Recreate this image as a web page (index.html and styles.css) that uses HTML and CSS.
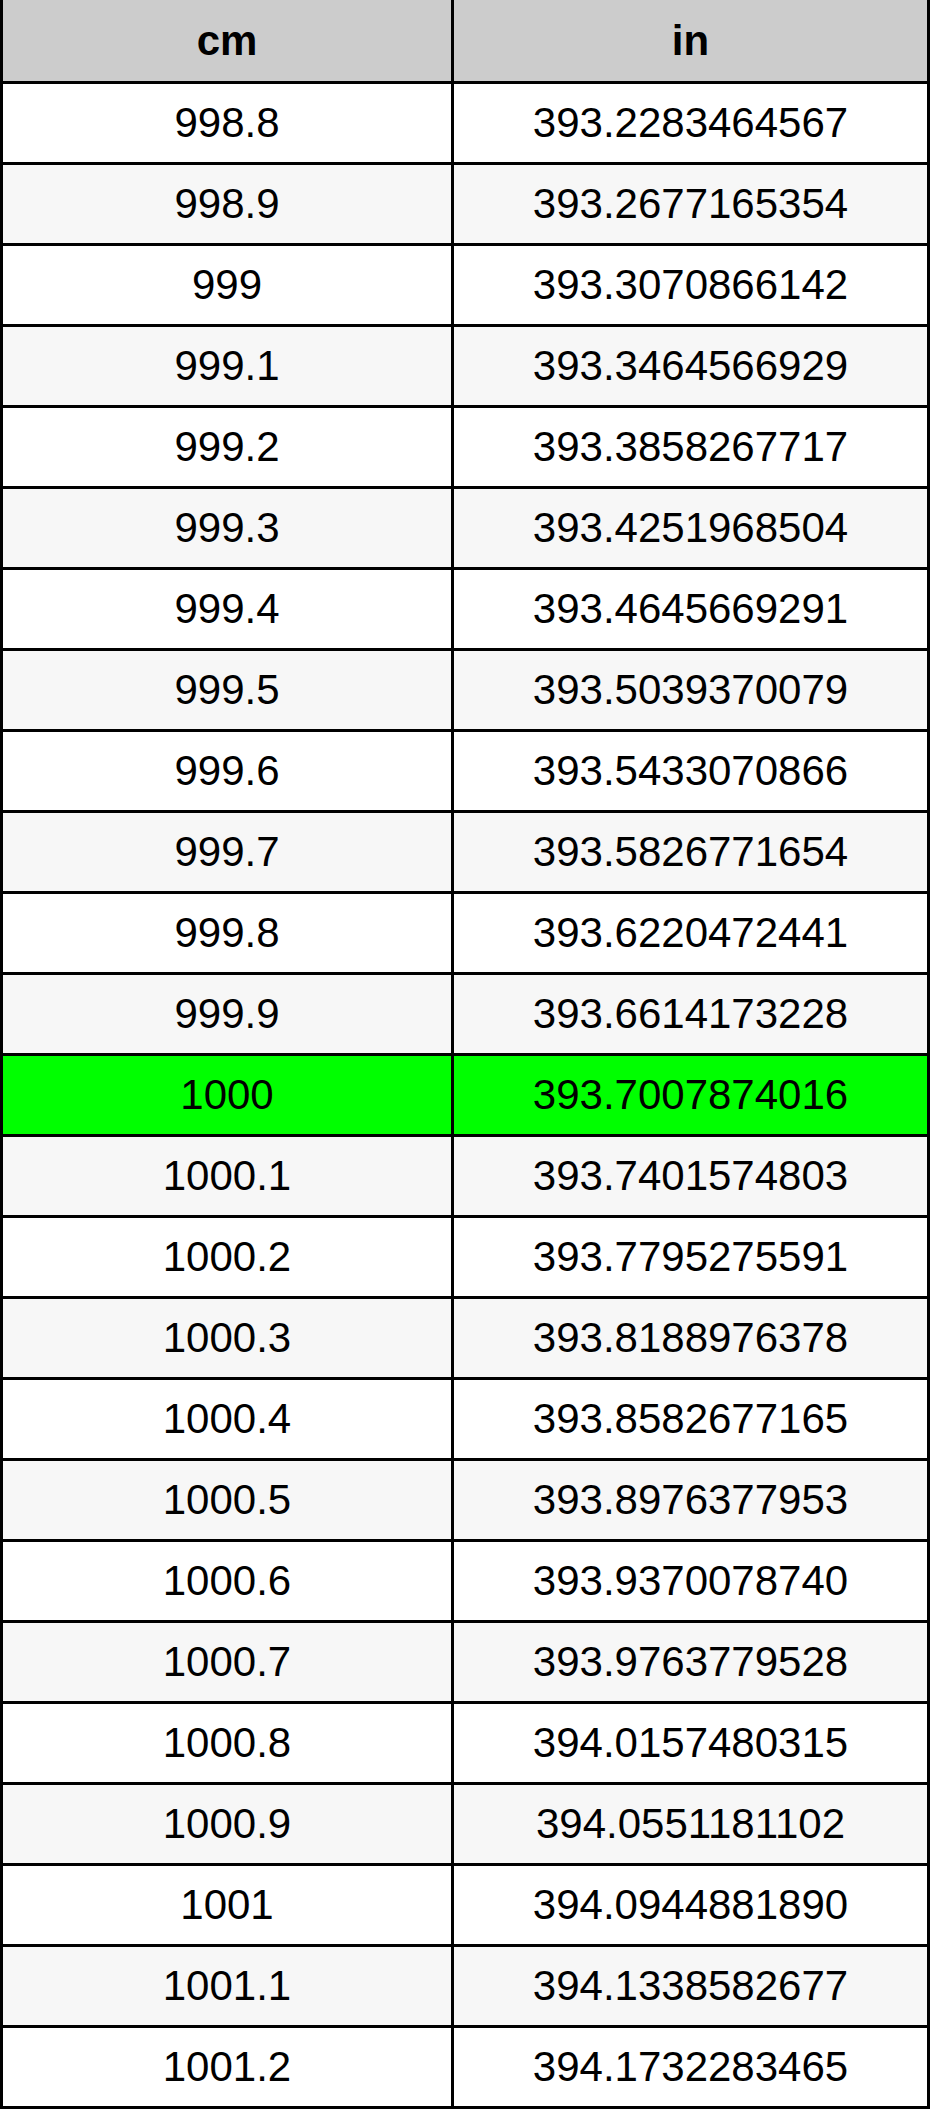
FILE: index.html
```html
<!DOCTYPE html>
<html>
<head>
<meta charset="utf-8">
<link rel="stylesheet" href="styles.css">
</head>
<body>
<div class="table">
  <div class="cell head">cm</div><div class="cell head">in</div>
  <div class="cell">998.8</div><div class="cell">393.2283464567</div>
  <div class="cell alt">998.9</div><div class="cell alt">393.2677165354</div>
  <div class="cell">999</div><div class="cell">393.3070866142</div>
  <div class="cell alt">999.1</div><div class="cell alt">393.3464566929</div>
  <div class="cell">999.2</div><div class="cell">393.3858267717</div>
  <div class="cell alt">999.3</div><div class="cell alt">393.4251968504</div>
  <div class="cell">999.4</div><div class="cell">393.4645669291</div>
  <div class="cell alt">999.5</div><div class="cell alt">393.5039370079</div>
  <div class="cell">999.6</div><div class="cell">393.5433070866</div>
  <div class="cell alt">999.7</div><div class="cell alt">393.5826771654</div>
  <div class="cell">999.8</div><div class="cell">393.6220472441</div>
  <div class="cell alt">999.9</div><div class="cell alt">393.6614173228</div>
  <div class="cell hl">1000</div><div class="cell hl">393.7007874016</div>
  <div class="cell alt">1000.1</div><div class="cell alt">393.7401574803</div>
  <div class="cell">1000.2</div><div class="cell">393.7795275591</div>
  <div class="cell alt">1000.3</div><div class="cell alt">393.8188976378</div>
  <div class="cell">1000.4</div><div class="cell">393.8582677165</div>
  <div class="cell alt">1000.5</div><div class="cell alt">393.8976377953</div>
  <div class="cell">1000.6</div><div class="cell">393.9370078740</div>
  <div class="cell alt">1000.7</div><div class="cell alt">393.9763779528</div>
  <div class="cell">1000.8</div><div class="cell">394.0157480315</div>
  <div class="cell alt">1000.9</div><div class="cell alt">394.0551181102</div>
  <div class="cell">1001</div><div class="cell">394.0944881890</div>
  <div class="cell alt">1001.1</div><div class="cell alt">394.1338582677</div>
  <div class="cell">1001.2</div><div class="cell">394.1732283465</div>
</div>
</body>
</html>
```

FILE: styles.css
```css
html, body {
  margin: 0;
  padding: 0;
  background: #ffffff;
}

.table {
  display: grid;
  grid-template-columns: 448px 473px;
  grid-template-rows: 81px;
  grid-auto-rows: 78px;
  gap: 3px;
  padding: 0 3px 3px 3px;
  background: #000000;
  width: 924px;
  font-family: "Liberation Sans", Arial, sans-serif;
  font-size: 42px;
  color: #000000;
}

.cell {
  background: #ffffff;
  display: flex;
  align-items: center;
  justify-content: center;
  line-height: 1;
}

.cell.alt {
  background: #f7f7f7;
}

.cell.head {
  background: #cccccc;
  font-weight: bold;
}

.cell.hl {
  background: #00ff00;
}
```
